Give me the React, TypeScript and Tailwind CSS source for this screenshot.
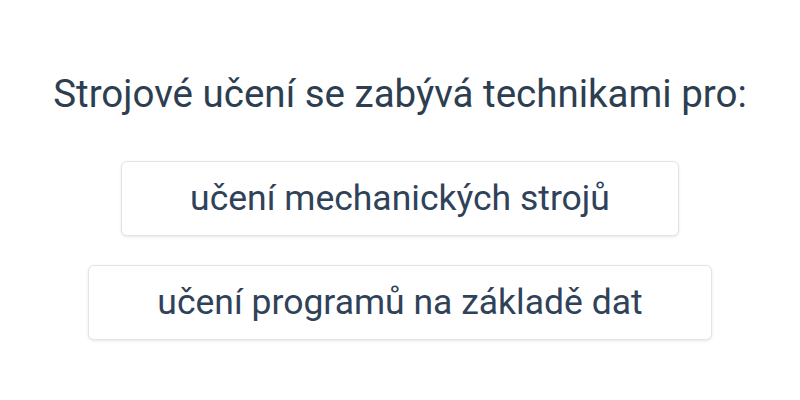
export default function App() {
  const options = ['učení mechanických strojů', 'učení programů na základě dat'];
  return (
    <div
      className="flex h-[400px] w-[800px] flex-col items-center bg-white pt-[69px] text-[#2c3e50]"
      style={{ fontFamily: 'Roboto, sans-serif' }}
    >
      <h1 className="text-[38.5px] leading-[50px]">Strojové učení se zabývá technikami pro:</h1>
      <div className="mt-[42px] flex flex-col items-center gap-[29px]">
        {options.map((o) => (
          <button
            key={o}
            className="h-[75px] rounded-[6px] border border-[#e2e4e8] bg-white px-[68px] text-[35.5px] text-[#2f4259] shadow-[0_1px_3px_rgba(0,0,0,0.1)]"
          >
            {o}
          </button>
        ))}
      </div>
    </div>
  );
}
